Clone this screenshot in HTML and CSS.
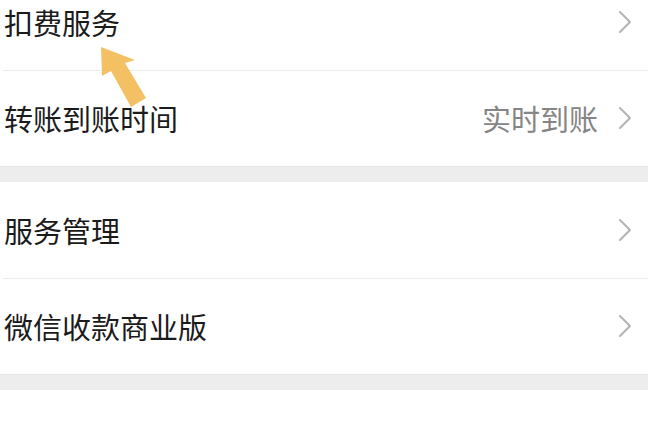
FILE: index.html
```html
<!DOCTYPE html>
<html lang="zh-CN">
<head>
<meta charset="utf-8">
<title>设置</title>
<link rel="stylesheet" href="styles.css">
</head>
<body>
<div class="page">
  <div class="group">
    <div class="row row-first">
      <span class="label">扣费服务</span>
      <span class="right"><svg class="chev" viewBox="0 0 14 24"><path d="M2 2 L12 12 L2 22" /></svg></span>
    </div>
    <div class="row">
      <span class="label">转账到账时间</span>
      <span class="right"><span class="value">实时到账</span><svg class="chev" viewBox="0 0 14 24"><path d="M2 2 L12 12 L2 22" /></svg></span>
    </div>
  </div>
  <div class="band"></div>
  <div class="group">
    <div class="row">
      <span class="label">服务管理</span>
      <span class="right"><svg class="chev" viewBox="0 0 14 24"><path d="M2 2 L12 12 L2 22" /></svg></span>
    </div>
    <div class="row">
      <span class="label">微信收款商业版</span>
      <span class="right"><svg class="chev" viewBox="0 0 14 24"><path d="M2 2 L12 12 L2 22" /></svg></span>
    </div>
  </div>
  <div class="band"></div>
  <svg class="arrow" viewBox="0 0 60 70" width="60" height="70">
    <path d="M11 5 L12 34 L21 29 L41 65 L56 56 L35 21 L45 18 Z" />
  </svg>
</div>
</body>
</html>
```

FILE: styles.css
```css
html, body {
  margin: 0;
  padding: 0;
  background: #ffffff;
}
body {
  font-family: "Noto Sans CJK SC", "Noto Sans", sans-serif;
  color: #1b1b1b;
  overflow: hidden;
  height: 426px;
}
.page {
  position: relative;
  width: 648px;
  margin-top: -26px;
}
.group {
  background: #ffffff;
}
.row {
  position: relative;
  height: 96px;
  display: flex;
  align-items: center;
  justify-content: space-between;
  padding-left: 4px;
  padding-right: 16px;
}
.row + .row::before {
  content: "";
  position: absolute;
  left: 3px;
  right: 0;
  top: 0;
  height: 1px;
  background: #ececec;
}
.label {
  font-size: 29px;
  line-height: 1;
}
.right {
  display: flex;
  align-items: center;
}
.value {
  font-size: 29px;
  line-height: 1;
  color: #858585;
  margin-right: 20px;
}
.chev {
  width: 14px;
  height: 24px;
  display: block;
}
.chev path {
  fill: none;
  stroke: #b3b3b3;
  stroke-width: 2;
  stroke-linecap: round;
  stroke-linejoin: round;
}
.band {
  height: 16px;
  background: #ededed;
  border-top: 1px solid #e6e6e6;
  box-sizing: border-box;
}
.arrow {
  position: absolute;
  left: 90px;
  top: 68px;
}
.arrow path {
  fill: #f4c064;
}
```
